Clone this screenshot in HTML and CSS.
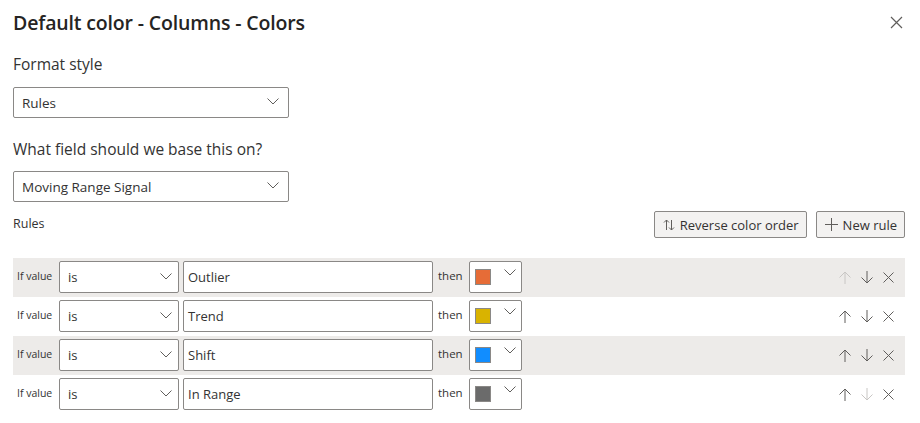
FILE: index.html
```html
<!DOCTYPE html>
<html>
<head>
<meta charset="utf-8">
<link rel="stylesheet" href="styles.css">
</head>
<body>
<div class="panel">
  <div class="header">
    <h1 class="title">Default color - Columns - Colors</h1>
    <button class="close" aria-label="Close">
      <svg width="13" height="13" viewBox="0 0 13 13"><path d="M1 1L12 12M12 1L1 12" stroke="#605e5c" stroke-width="1.2" fill="none"/></svg>
    </button>
  </div>

  <div class="field-label first">Format style</div>
  <div class="dropdown">
    <span>Rules</span>
    <svg class="chev" width="12" height="7" viewBox="0 0 12 7"><path d="M0.5 0.5L6 6L11.5 0.5" stroke="#605e5c" fill="none"/></svg>
  </div>

  <div class="field-label second">What field should we base this on?</div>
  <div class="dropdown">
    <span>Moving Range Signal</span>
    <svg class="chev" width="12" height="7" viewBox="0 0 12 7"><path d="M0.5 0.5L6 6L11.5 0.5" stroke="#605e5c" fill="none"/></svg>
  </div>

  <div class="rules-bar">
    <span class="rules-label">Rules</span>
    <div class="actions">
      <button class="btn">
        <svg width="12" height="12" viewBox="0 0 12 12"><path d="M3.5 11V1M1 3.5L3.5 1L6 3.5M8.5 1V11M6 8.5L8.5 11L11 8.5" stroke="#605e5c" fill="none"/></svg>
        Reverse color order
      </button>
      <button class="btn">
        <svg width="13" height="13" viewBox="0 0 13 13"><path d="M6.5 0V13M0 6.5H13" stroke="#605e5c" fill="none"/></svg>
        New rule
      </button>
    </div>
  </div>

  <div class="rules">
    <div class="rule shaded">
      <span class="ifv">If value</span>
      <div class="sel"><span>is</span><svg class="chev" width="12" height="7" viewBox="0 0 12 7"><path d="M0.5 0.5L6 6L11.5 0.5" stroke="#605e5c" fill="none"/></svg></div>
      <div class="txt">Outlier</div>
      <span class="then">then</span>
      <div class="color"><span class="sw orange"></span><svg class="chev" width="12" height="7" viewBox="0 0 12 7"><path d="M0.5 0.5L6 6L11.5 0.5" stroke="#605e5c" fill="none"/></svg></div>
      <div class="icons">
        <svg class="ic dis" width="12" height="13" viewBox="0 0 12 13"><path d="M6 13V1M0.5 6.5L6 1L11.5 6.5" fill="none"/></svg>
        <svg class="ic" width="12" height="13" viewBox="0 0 12 13"><path d="M6 0V12M0.5 6.5L6 12L11.5 6.5" fill="none"/></svg>
        <svg class="ic" width="11" height="11" viewBox="0 0 11 11"><path d="M0.5 0.5L10.5 10.5M10.5 0.5L0.5 10.5" fill="none"/></svg>
      </div>
    </div>
    <div class="rule">
      <span class="ifv">If value</span>
      <div class="sel"><span>is</span><svg class="chev" width="12" height="7" viewBox="0 0 12 7"><path d="M0.5 0.5L6 6L11.5 0.5" stroke="#605e5c" fill="none"/></svg></div>
      <div class="txt">Trend</div>
      <span class="then">then</span>
      <div class="color"><span class="sw yellow"></span><svg class="chev" width="12" height="7" viewBox="0 0 12 7"><path d="M0.5 0.5L6 6L11.5 0.5" stroke="#605e5c" fill="none"/></svg></div>
      <div class="icons">
        <svg class="ic" width="12" height="13" viewBox="0 0 12 13"><path d="M6 13V1M0.5 6.5L6 1L11.5 6.5" fill="none"/></svg>
        <svg class="ic" width="12" height="13" viewBox="0 0 12 13"><path d="M6 0V12M0.5 6.5L6 12L11.5 6.5" fill="none"/></svg>
        <svg class="ic" width="11" height="11" viewBox="0 0 11 11"><path d="M0.5 0.5L10.5 10.5M10.5 0.5L0.5 10.5" fill="none"/></svg>
      </div>
    </div>
    <div class="rule shaded">
      <span class="ifv">If value</span>
      <div class="sel"><span>is</span><svg class="chev" width="12" height="7" viewBox="0 0 12 7"><path d="M0.5 0.5L6 6L11.5 0.5" stroke="#605e5c" fill="none"/></svg></div>
      <div class="txt">Shift</div>
      <span class="then">then</span>
      <div class="color"><span class="sw blue"></span><svg class="chev" width="12" height="7" viewBox="0 0 12 7"><path d="M0.5 0.5L6 6L11.5 0.5" stroke="#605e5c" fill="none"/></svg></div>
      <div class="icons">
        <svg class="ic" width="12" height="13" viewBox="0 0 12 13"><path d="M6 13V1M0.5 6.5L6 1L11.5 6.5" fill="none"/></svg>
        <svg class="ic" width="12" height="13" viewBox="0 0 12 13"><path d="M6 0V12M0.5 6.5L6 12L11.5 6.5" fill="none"/></svg>
        <svg class="ic" width="11" height="11" viewBox="0 0 11 11"><path d="M0.5 0.5L10.5 10.5M10.5 0.5L0.5 10.5" fill="none"/></svg>
      </div>
    </div>
    <div class="rule">
      <span class="ifv">If value</span>
      <div class="sel"><span>is</span><svg class="chev" width="12" height="7" viewBox="0 0 12 7"><path d="M0.5 0.5L6 6L11.5 0.5" stroke="#605e5c" fill="none"/></svg></div>
      <div class="txt">In Range</div>
      <span class="then">then</span>
      <div class="color"><span class="sw gray"></span><svg class="chev" width="12" height="7" viewBox="0 0 12 7"><path d="M0.5 0.5L6 6L11.5 0.5" stroke="#605e5c" fill="none"/></svg></div>
      <div class="icons">
        <svg class="ic" width="12" height="13" viewBox="0 0 12 13"><path d="M6 13V1M0.5 6.5L6 1L11.5 6.5" fill="none"/></svg>
        <svg class="ic dis" width="12" height="13" viewBox="0 0 12 13"><path d="M6 0V12M0.5 6.5L6 12L11.5 6.5" fill="none"/></svg>
        <svg class="ic" width="11" height="11" viewBox="0 0 11 11"><path d="M0.5 0.5L10.5 10.5M10.5 0.5L0.5 10.5" fill="none"/></svg>
      </div>
    </div>
  </div>
</div>
</body>
</html>
```

FILE: styles.css
```css
* { box-sizing: border-box; }
html, body { margin: 0; padding: 0; background: #fff; }
body {
  font-family: "Open Sans", "Noto Sans", "Liberation Sans", sans-serif;
  color: #252423;
  width: 920px;
  height: 423px;
  overflow: hidden;
}
.panel {
  padding: 8px 15px 0 13px;
}
.header {
  display: flex;
  justify-content: space-between;
  align-items: center;
  height: 28px;
}
.title {
  margin: 0;
  font-size: 19.5px;
  font-weight: 600;
  letter-spacing: -0.15px;
  color: #252423;
}
.close {
  border: 0;
  background: none;
  padding: 0;
  margin-right: 2px;
  margin-top: 1px;
  display: flex;
}
.field-label {
  font-size: 15.5px;
  color: #333;
  line-height: 20px;
}
.field-label.first { margin-top: 18px; margin-bottom: 13px; }
.field-label.second { margin-top: 21px; margin-bottom: 12px; }
.dropdown {
  width: 276px;
  height: 31px;
  border: 1px solid #8a8886;
  border-radius: 2px;
  display: flex;
  align-items: center;
  justify-content: space-between;
  padding: 0 9px 0 8px;
  font-size: 13.5px;
  color: #333;
}
.chev { flex: none; margin-top: -2px; }
.rules-bar {
  display: flex;
  justify-content: space-between;
  align-items: flex-start;
  margin-top: 9px;
  height: 47px;
}
.rules-label {
  font-size: 12.5px;
  color: #333;
  margin-top: 4px;
}
.actions { display: flex; gap: 9px; }
.btn {
  display: flex;
  align-items: center;
  gap: 5px;
  height: 27px;
  padding: 0 7px 0 8px;
  border: 1px solid #8a8886;
  border-radius: 2px;
  background: #f3f2f1;
  font-family: inherit;
  font-size: 13px;
  color: #333;
}
.rules { display: flex; flex-direction: column; }
.rule {
  display: flex;
  align-items: center;
  height: 39px;
  padding: 0 0 1px 4px;
}
.rule.shaded { background: #edebe9; }
.ifv {
  font-size: 10.5px;
  color: #333;
  width: 42px;
  margin-top: -3px;
}
.sel, .txt, .color {
  height: 32px;
  border: 1px solid #8a8886;
  border-radius: 2px;
  background: #fff;
  display: flex;
  align-items: center;
  font-size: 13px;
  color: #333;
}
.sel {
  width: 120px;
  justify-content: space-between;
  padding: 0 6px 0 8px;
}
.txt {
  width: 250px;
  margin-left: 4px;
  padding-left: 4px;
}
.then {
  font-size: 11.5px;
  color: #333;
  margin-left: 5px;
  width: 31px;
  margin-top: -3px;
}
.color {
  width: 53px;
  padding: 0 5px 0 5px;
  justify-content: space-between;
  align-items: flex-start;
}
.color .chev { margin-top: 7px; }
.sw {
  width: 16px;
  height: 16px;
  border: 1px solid #8a8886;
  margin-top: 7px;
}
.orange { background: #e66c37; }
.yellow { background: #d9b300; }
.blue { background: #118dff; }
.gray { background: #6b6b6b; }
.icons {
  margin-left: auto;
  margin-right: 11px;
  display: flex;
  align-items: center;
  gap: 10px;
}
.ic { stroke: #605e5c; stroke-width: 1; }
.ic.dis { stroke: #c8c6c4; }
```
